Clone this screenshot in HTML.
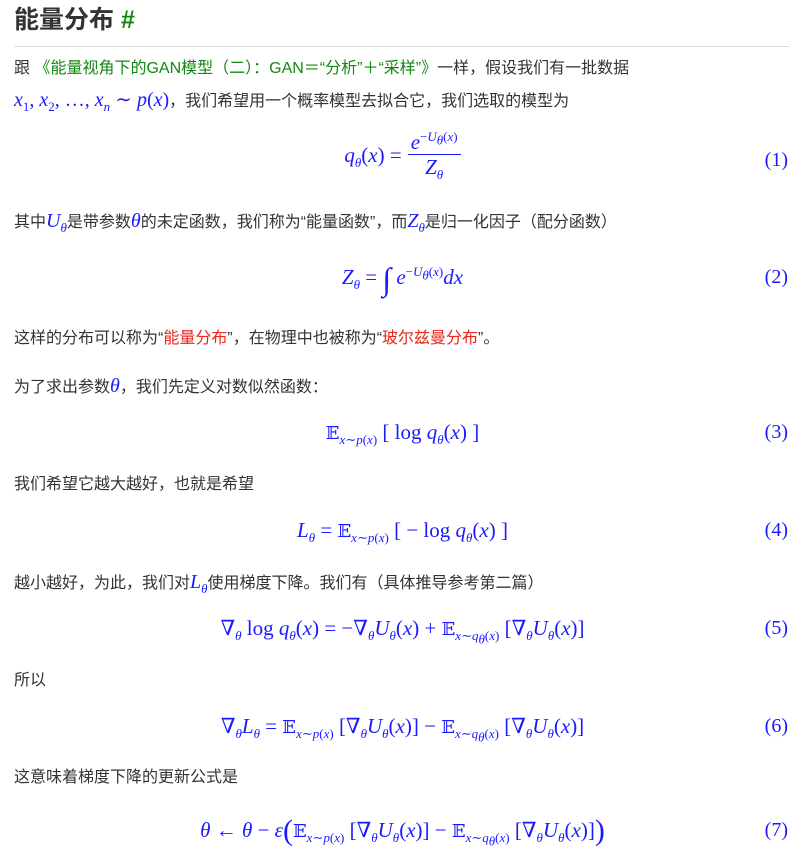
<!DOCTYPE html>
<html><head><meta charset="utf-8"><style>
body{margin:0;width:805px;height:863px;background:#fff;font-family:"Liberation Sans","Noto Sans CJK SC",sans-serif;color:#333;font-size:16px;position:relative;overflow:hidden}
.a{position:absolute;white-space:nowrap;line-height:20px}
.m{color:#1a1aff;font-family:"Liberation Serif","DejaVu Serif",serif;font-size:20px}
.eq.m{font-size:21px}
i{font-style:italic}
sub,sup{font-size:13px;line-height:0}
.g{color:#118811}.r{color:#e8261b}
.eq{position:absolute;left:0;width:805px;text-align:center;line-height:24px}
.n{position:absolute;right:17px;color:#1a1aff;font-family:"Liberation Serif",serif;font-size:20px;line-height:24px}
.bb{font-family:"DejaVu Serif",serif;font-size:18px}
</style></head><body>
<div class="a" style="left:14px;top:5px;font-size:25px;line-height:30px;font-weight:bold;color:#333">能量分布 <span class="g">#</span></div>
<div style="position:absolute;left:14px;top:46px;width:775px;height:1px;background:#ddd"></div>
<div class="a" style="left:14px;top:59px">跟 <span class="g">《能量视角下的GAN模型（二）：GAN＝“分析”＋“采样”》</span>一样，假设我们有一批数据</div>
<div class="a" style="left:14px;top:90px"><span class="m"><i>x</i><sub>1</sub>, <i>x</i><sub>2</sub>, …, <i>x<sub>n</sub></i> ∼ <i>p</i>(<i>x</i>)</span>，我们希望用一个概率模型去拟合它，我们选取的模型为</div>
<div class="eq m" style="top:130px"><span style="display:inline-flex;align-items:center;gap:6px"><span><i>q<sub>θ</sub></i>(<i>x</i>) =</span><span style="display:inline-flex;flex-direction:column;align-items:center"><span style="border-bottom:1px solid #1a1aff;padding:0 3px"><i>e</i><sup style="font-size:13px">−<i>U<sub>θ</sub></i>(<i>x</i>)</sup></span><span><i>Z<sub>θ</sub></i></span></span></span></div>
<div class="n" style="top:148px">(1)</div>
<div class="a" style="left:14px;top:211px">其中<span class="m"><i>U<sub>θ</sub></i></span>是带参数<span class="m"><i>θ</i></span>的未定函数，我们称为“能量函数”，而<span class="m"><i>Z<sub>θ</sub></i></span>是归一化因子（配分函数）</div>
<div class="eq m" style="top:265px"><i>Z<sub>θ</sub></i> = <span style="font-size:32px;vertical-align:-6px">∫</span> <i>e</i><sup>−<i>U<sub>θ</sub></i>(<i>x</i>)</sup><i>dx</i></div>
<div class="n" style="top:265px">(2)</div>
<div class="a" style="left:14px;top:329px">这样的分布可以称为“<span class="r">能量分布</span>”，在物理中也被称为“<span class="r">玻尔兹曼分布</span>”。</div>
<div class="a" style="left:14px;top:376px">为了求出参数<span class="m"><i>θ</i></span>，我们先定义对数似然函数：</div>
<div class="eq m" style="top:420px"><span class="bb">𝔼</span><sub><i>x</i>∼<i>p</i>(<i>x</i>)</sub> [ log <i>q<sub>θ</sub></i>(<i>x</i>) ]</div>
<div class="n" style="top:420px">(3)</div>
<div class="a" style="left:14px;top:475px">我们希望它越大越好，也就是希望</div>
<div class="eq m" style="top:518px"><i>L<sub>θ</sub></i> = <span class="bb">𝔼</span><sub><i>x</i>∼<i>p</i>(<i>x</i>)</sub> [ − log <i>q<sub>θ</sub></i>(<i>x</i>) ]</div>
<div class="n" style="top:518px">(4)</div>
<div class="a" style="left:14px;top:572px">越小越好，为此，我们对<span class="m"><i>L<sub>θ</sub></i></span>使用梯度下降。我们有（具体推导参考第二篇）</div>
<div class="eq m" style="top:616px">∇<sub><i>θ</i></sub> log <i>q<sub>θ</sub></i>(<i>x</i>) = −∇<sub><i>θ</i></sub><i>U<sub>θ</sub></i>(<i>x</i>) + <span class="bb">𝔼</span><sub><i>x</i>∼<i>q<sub>θ</sub></i>(<i>x</i>)</sub> [∇<sub><i>θ</i></sub><i>U<sub>θ</sub></i>(<i>x</i>)]</div>
<div class="n" style="top:616px">(5)</div>
<div class="a" style="left:14px;top:671px">所以</div>
<div class="eq m" style="top:714px">∇<sub><i>θ</i></sub><i>L<sub>θ</sub></i> = <span class="bb">𝔼</span><sub><i>x</i>∼<i>p</i>(<i>x</i>)</sub> [∇<sub><i>θ</i></sub><i>U<sub>θ</sub></i>(<i>x</i>)] − <span class="bb">𝔼</span><sub><i>x</i>∼<i>q<sub>θ</sub></i>(<i>x</i>)</sub> [∇<sub><i>θ</i></sub><i>U<sub>θ</sub></i>(<i>x</i>)]</div>
<div class="n" style="top:714px">(6)</div>
<div class="a" style="left:14px;top:768px">这意味着梯度下降的更新公式是</div>
<div class="eq m" style="top:818px"><i>θ</i> ← <i>θ</i> − <i>ε</i><span style="font-size:30px;vertical-align:-3px">(</span><span class="bb">𝔼</span><sub><i>x</i>∼<i>p</i>(<i>x</i>)</sub> [∇<sub><i>θ</i></sub><i>U<sub>θ</sub></i>(<i>x</i>)] − <span class="bb">𝔼</span><sub><i>x</i>∼<i>q<sub>θ</sub></i>(<i>x</i>)</sub> [∇<sub><i>θ</i></sub><i>U<sub>θ</sub></i>(<i>x</i>)]<span style="font-size:30px;vertical-align:-3px">)</span></div>
<div class="n" style="top:818px">(7)</div>
</body></html>
